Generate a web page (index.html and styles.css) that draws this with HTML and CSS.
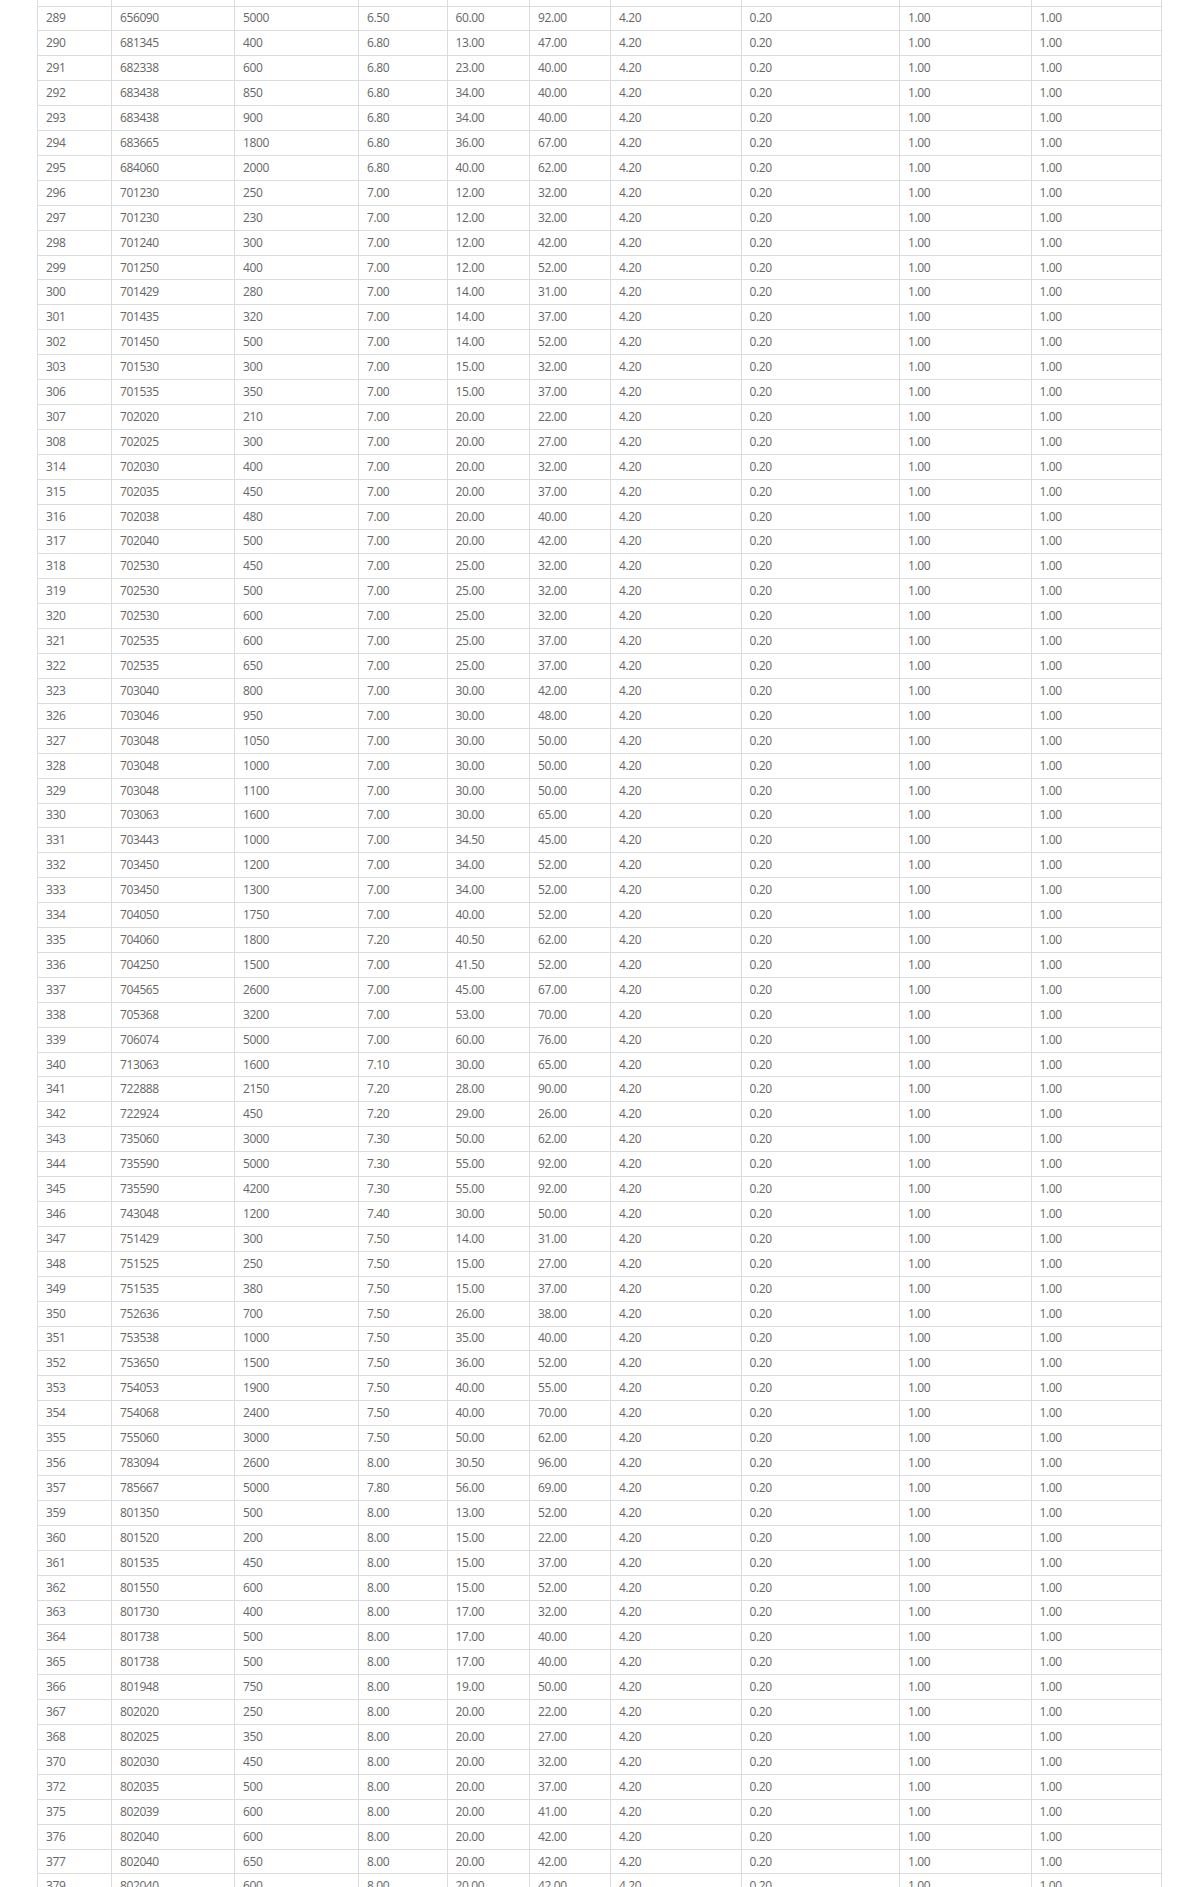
FILE: index.html
```html
<!DOCTYPE html>
<html lang="en">
<head>
<meta charset="utf-8">
<title>Data table</title>
<link rel="stylesheet" href="styles.css">
</head>
<body>
<table class="data">
<colgroup>
<col class="c1"><col class="c2"><col class="c3"><col class="c4"><col class="c5"><col class="c6"><col class="c7"><col class="c8"><col class="c9"><col class="c10">
</colgroup>
<tbody>
<tr class="spacer"><td></td><td></td><td></td><td></td><td></td><td></td><td></td><td></td><td></td><td></td></tr>
<tr><td>289</td><td>656090</td><td>5000</td><td>6.50</td><td>60.00</td><td>92.00</td><td>4.20</td><td>0.20</td><td>1.00</td><td>1.00</td></tr>
<tr><td>290</td><td>681345</td><td>400</td><td>6.80</td><td>13.00</td><td>47.00</td><td>4.20</td><td>0.20</td><td>1.00</td><td>1.00</td></tr>
<tr><td>291</td><td>682338</td><td>600</td><td>6.80</td><td>23.00</td><td>40.00</td><td>4.20</td><td>0.20</td><td>1.00</td><td>1.00</td></tr>
<tr><td>292</td><td>683438</td><td>850</td><td>6.80</td><td>34.00</td><td>40.00</td><td>4.20</td><td>0.20</td><td>1.00</td><td>1.00</td></tr>
<tr><td>293</td><td>683438</td><td>900</td><td>6.80</td><td>34.00</td><td>40.00</td><td>4.20</td><td>0.20</td><td>1.00</td><td>1.00</td></tr>
<tr><td>294</td><td>683665</td><td>1800</td><td>6.80</td><td>36.00</td><td>67.00</td><td>4.20</td><td>0.20</td><td>1.00</td><td>1.00</td></tr>
<tr><td>295</td><td>684060</td><td>2000</td><td>6.80</td><td>40.00</td><td>62.00</td><td>4.20</td><td>0.20</td><td>1.00</td><td>1.00</td></tr>
<tr><td>296</td><td>701230</td><td>250</td><td>7.00</td><td>12.00</td><td>32.00</td><td>4.20</td><td>0.20</td><td>1.00</td><td>1.00</td></tr>
<tr><td>297</td><td>701230</td><td>230</td><td>7.00</td><td>12.00</td><td>32.00</td><td>4.20</td><td>0.20</td><td>1.00</td><td>1.00</td></tr>
<tr><td>298</td><td>701240</td><td>300</td><td>7.00</td><td>12.00</td><td>42.00</td><td>4.20</td><td>0.20</td><td>1.00</td><td>1.00</td></tr>
<tr><td>299</td><td>701250</td><td>400</td><td>7.00</td><td>12.00</td><td>52.00</td><td>4.20</td><td>0.20</td><td>1.00</td><td>1.00</td></tr>
<tr><td>300</td><td>701429</td><td>280</td><td>7.00</td><td>14.00</td><td>31.00</td><td>4.20</td><td>0.20</td><td>1.00</td><td>1.00</td></tr>
<tr><td>301</td><td>701435</td><td>320</td><td>7.00</td><td>14.00</td><td>37.00</td><td>4.20</td><td>0.20</td><td>1.00</td><td>1.00</td></tr>
<tr><td>302</td><td>701450</td><td>500</td><td>7.00</td><td>14.00</td><td>52.00</td><td>4.20</td><td>0.20</td><td>1.00</td><td>1.00</td></tr>
<tr><td>303</td><td>701530</td><td>300</td><td>7.00</td><td>15.00</td><td>32.00</td><td>4.20</td><td>0.20</td><td>1.00</td><td>1.00</td></tr>
<tr><td>306</td><td>701535</td><td>350</td><td>7.00</td><td>15.00</td><td>37.00</td><td>4.20</td><td>0.20</td><td>1.00</td><td>1.00</td></tr>
<tr><td>307</td><td>702020</td><td>210</td><td>7.00</td><td>20.00</td><td>22.00</td><td>4.20</td><td>0.20</td><td>1.00</td><td>1.00</td></tr>
<tr><td>308</td><td>702025</td><td>300</td><td>7.00</td><td>20.00</td><td>27.00</td><td>4.20</td><td>0.20</td><td>1.00</td><td>1.00</td></tr>
<tr><td>314</td><td>702030</td><td>400</td><td>7.00</td><td>20.00</td><td>32.00</td><td>4.20</td><td>0.20</td><td>1.00</td><td>1.00</td></tr>
<tr><td>315</td><td>702035</td><td>450</td><td>7.00</td><td>20.00</td><td>37.00</td><td>4.20</td><td>0.20</td><td>1.00</td><td>1.00</td></tr>
<tr><td>316</td><td>702038</td><td>480</td><td>7.00</td><td>20.00</td><td>40.00</td><td>4.20</td><td>0.20</td><td>1.00</td><td>1.00</td></tr>
<tr><td>317</td><td>702040</td><td>500</td><td>7.00</td><td>20.00</td><td>42.00</td><td>4.20</td><td>0.20</td><td>1.00</td><td>1.00</td></tr>
<tr><td>318</td><td>702530</td><td>450</td><td>7.00</td><td>25.00</td><td>32.00</td><td>4.20</td><td>0.20</td><td>1.00</td><td>1.00</td></tr>
<tr><td>319</td><td>702530</td><td>500</td><td>7.00</td><td>25.00</td><td>32.00</td><td>4.20</td><td>0.20</td><td>1.00</td><td>1.00</td></tr>
<tr><td>320</td><td>702530</td><td>600</td><td>7.00</td><td>25.00</td><td>32.00</td><td>4.20</td><td>0.20</td><td>1.00</td><td>1.00</td></tr>
<tr><td>321</td><td>702535</td><td>600</td><td>7.00</td><td>25.00</td><td>37.00</td><td>4.20</td><td>0.20</td><td>1.00</td><td>1.00</td></tr>
<tr><td>322</td><td>702535</td><td>650</td><td>7.00</td><td>25.00</td><td>37.00</td><td>4.20</td><td>0.20</td><td>1.00</td><td>1.00</td></tr>
<tr><td>323</td><td>703040</td><td>800</td><td>7.00</td><td>30.00</td><td>42.00</td><td>4.20</td><td>0.20</td><td>1.00</td><td>1.00</td></tr>
<tr><td>326</td><td>703046</td><td>950</td><td>7.00</td><td>30.00</td><td>48.00</td><td>4.20</td><td>0.20</td><td>1.00</td><td>1.00</td></tr>
<tr><td>327</td><td>703048</td><td>1050</td><td>7.00</td><td>30.00</td><td>50.00</td><td>4.20</td><td>0.20</td><td>1.00</td><td>1.00</td></tr>
<tr><td>328</td><td>703048</td><td>1000</td><td>7.00</td><td>30.00</td><td>50.00</td><td>4.20</td><td>0.20</td><td>1.00</td><td>1.00</td></tr>
<tr><td>329</td><td>703048</td><td>1100</td><td>7.00</td><td>30.00</td><td>50.00</td><td>4.20</td><td>0.20</td><td>1.00</td><td>1.00</td></tr>
<tr><td>330</td><td>703063</td><td>1600</td><td>7.00</td><td>30.00</td><td>65.00</td><td>4.20</td><td>0.20</td><td>1.00</td><td>1.00</td></tr>
<tr><td>331</td><td>703443</td><td>1000</td><td>7.00</td><td>34.50</td><td>45.00</td><td>4.20</td><td>0.20</td><td>1.00</td><td>1.00</td></tr>
<tr><td>332</td><td>703450</td><td>1200</td><td>7.00</td><td>34.00</td><td>52.00</td><td>4.20</td><td>0.20</td><td>1.00</td><td>1.00</td></tr>
<tr><td>333</td><td>703450</td><td>1300</td><td>7.00</td><td>34.00</td><td>52.00</td><td>4.20</td><td>0.20</td><td>1.00</td><td>1.00</td></tr>
<tr><td>334</td><td>704050</td><td>1750</td><td>7.00</td><td>40.00</td><td>52.00</td><td>4.20</td><td>0.20</td><td>1.00</td><td>1.00</td></tr>
<tr><td>335</td><td>704060</td><td>1800</td><td>7.20</td><td>40.50</td><td>62.00</td><td>4.20</td><td>0.20</td><td>1.00</td><td>1.00</td></tr>
<tr><td>336</td><td>704250</td><td>1500</td><td>7.00</td><td>41.50</td><td>52.00</td><td>4.20</td><td>0.20</td><td>1.00</td><td>1.00</td></tr>
<tr><td>337</td><td>704565</td><td>2600</td><td>7.00</td><td>45.00</td><td>67.00</td><td>4.20</td><td>0.20</td><td>1.00</td><td>1.00</td></tr>
<tr><td>338</td><td>705368</td><td>3200</td><td>7.00</td><td>53.00</td><td>70.00</td><td>4.20</td><td>0.20</td><td>1.00</td><td>1.00</td></tr>
<tr><td>339</td><td>706074</td><td>5000</td><td>7.00</td><td>60.00</td><td>76.00</td><td>4.20</td><td>0.20</td><td>1.00</td><td>1.00</td></tr>
<tr><td>340</td><td>713063</td><td>1600</td><td>7.10</td><td>30.00</td><td>65.00</td><td>4.20</td><td>0.20</td><td>1.00</td><td>1.00</td></tr>
<tr><td>341</td><td>722888</td><td>2150</td><td>7.20</td><td>28.00</td><td>90.00</td><td>4.20</td><td>0.20</td><td>1.00</td><td>1.00</td></tr>
<tr><td>342</td><td>722924</td><td>450</td><td>7.20</td><td>29.00</td><td>26.00</td><td>4.20</td><td>0.20</td><td>1.00</td><td>1.00</td></tr>
<tr><td>343</td><td>735060</td><td>3000</td><td>7.30</td><td>50.00</td><td>62.00</td><td>4.20</td><td>0.20</td><td>1.00</td><td>1.00</td></tr>
<tr><td>344</td><td>735590</td><td>5000</td><td>7.30</td><td>55.00</td><td>92.00</td><td>4.20</td><td>0.20</td><td>1.00</td><td>1.00</td></tr>
<tr><td>345</td><td>735590</td><td>4200</td><td>7.30</td><td>55.00</td><td>92.00</td><td>4.20</td><td>0.20</td><td>1.00</td><td>1.00</td></tr>
<tr><td>346</td><td>743048</td><td>1200</td><td>7.40</td><td>30.00</td><td>50.00</td><td>4.20</td><td>0.20</td><td>1.00</td><td>1.00</td></tr>
<tr><td>347</td><td>751429</td><td>300</td><td>7.50</td><td>14.00</td><td>31.00</td><td>4.20</td><td>0.20</td><td>1.00</td><td>1.00</td></tr>
<tr><td>348</td><td>751525</td><td>250</td><td>7.50</td><td>15.00</td><td>27.00</td><td>4.20</td><td>0.20</td><td>1.00</td><td>1.00</td></tr>
<tr><td>349</td><td>751535</td><td>380</td><td>7.50</td><td>15.00</td><td>37.00</td><td>4.20</td><td>0.20</td><td>1.00</td><td>1.00</td></tr>
<tr><td>350</td><td>752636</td><td>700</td><td>7.50</td><td>26.00</td><td>38.00</td><td>4.20</td><td>0.20</td><td>1.00</td><td>1.00</td></tr>
<tr><td>351</td><td>753538</td><td>1000</td><td>7.50</td><td>35.00</td><td>40.00</td><td>4.20</td><td>0.20</td><td>1.00</td><td>1.00</td></tr>
<tr><td>352</td><td>753650</td><td>1500</td><td>7.50</td><td>36.00</td><td>52.00</td><td>4.20</td><td>0.20</td><td>1.00</td><td>1.00</td></tr>
<tr><td>353</td><td>754053</td><td>1900</td><td>7.50</td><td>40.00</td><td>55.00</td><td>4.20</td><td>0.20</td><td>1.00</td><td>1.00</td></tr>
<tr><td>354</td><td>754068</td><td>2400</td><td>7.50</td><td>40.00</td><td>70.00</td><td>4.20</td><td>0.20</td><td>1.00</td><td>1.00</td></tr>
<tr><td>355</td><td>755060</td><td>3000</td><td>7.50</td><td>50.00</td><td>62.00</td><td>4.20</td><td>0.20</td><td>1.00</td><td>1.00</td></tr>
<tr><td>356</td><td>783094</td><td>2600</td><td>8.00</td><td>30.50</td><td>96.00</td><td>4.20</td><td>0.20</td><td>1.00</td><td>1.00</td></tr>
<tr><td>357</td><td>785667</td><td>5000</td><td>7.80</td><td>56.00</td><td>69.00</td><td>4.20</td><td>0.20</td><td>1.00</td><td>1.00</td></tr>
<tr><td>359</td><td>801350</td><td>500</td><td>8.00</td><td>13.00</td><td>52.00</td><td>4.20</td><td>0.20</td><td>1.00</td><td>1.00</td></tr>
<tr><td>360</td><td>801520</td><td>200</td><td>8.00</td><td>15.00</td><td>22.00</td><td>4.20</td><td>0.20</td><td>1.00</td><td>1.00</td></tr>
<tr><td>361</td><td>801535</td><td>450</td><td>8.00</td><td>15.00</td><td>37.00</td><td>4.20</td><td>0.20</td><td>1.00</td><td>1.00</td></tr>
<tr><td>362</td><td>801550</td><td>600</td><td>8.00</td><td>15.00</td><td>52.00</td><td>4.20</td><td>0.20</td><td>1.00</td><td>1.00</td></tr>
<tr><td>363</td><td>801730</td><td>400</td><td>8.00</td><td>17.00</td><td>32.00</td><td>4.20</td><td>0.20</td><td>1.00</td><td>1.00</td></tr>
<tr><td>364</td><td>801738</td><td>500</td><td>8.00</td><td>17.00</td><td>40.00</td><td>4.20</td><td>0.20</td><td>1.00</td><td>1.00</td></tr>
<tr><td>365</td><td>801738</td><td>500</td><td>8.00</td><td>17.00</td><td>40.00</td><td>4.20</td><td>0.20</td><td>1.00</td><td>1.00</td></tr>
<tr><td>366</td><td>801948</td><td>750</td><td>8.00</td><td>19.00</td><td>50.00</td><td>4.20</td><td>0.20</td><td>1.00</td><td>1.00</td></tr>
<tr><td>367</td><td>802020</td><td>250</td><td>8.00</td><td>20.00</td><td>22.00</td><td>4.20</td><td>0.20</td><td>1.00</td><td>1.00</td></tr>
<tr><td>368</td><td>802025</td><td>350</td><td>8.00</td><td>20.00</td><td>27.00</td><td>4.20</td><td>0.20</td><td>1.00</td><td>1.00</td></tr>
<tr><td>370</td><td>802030</td><td>450</td><td>8.00</td><td>20.00</td><td>32.00</td><td>4.20</td><td>0.20</td><td>1.00</td><td>1.00</td></tr>
<tr><td>372</td><td>802035</td><td>500</td><td>8.00</td><td>20.00</td><td>37.00</td><td>4.20</td><td>0.20</td><td>1.00</td><td>1.00</td></tr>
<tr><td>375</td><td>802039</td><td>600</td><td>8.00</td><td>20.00</td><td>41.00</td><td>4.20</td><td>0.20</td><td>1.00</td><td>1.00</td></tr>
<tr><td>376</td><td>802040</td><td>600</td><td>8.00</td><td>20.00</td><td>42.00</td><td>4.20</td><td>0.20</td><td>1.00</td><td>1.00</td></tr>
<tr><td>377</td><td>802040</td><td>650</td><td>8.00</td><td>20.00</td><td>42.00</td><td>4.20</td><td>0.20</td><td>1.00</td><td>1.00</td></tr>
<tr><td>379</td><td>802040</td><td>600</td><td>8.00</td><td>20.00</td><td>42.00</td><td>4.20</td><td>0.20</td><td>1.00</td><td>1.00</td></tr>
</tbody>
</table>
</body>
</html>
```

FILE: styles.css
```css
html, body {
  margin: 0;
  padding: 0;
  background: #ffffff;
}

body {
  font-family: "Open Sans", "Noto Sans", "Liberation Sans", sans-serif;
  font-size: 12px;
  letter-spacing: -0.4px;
  color: #666666;
}

.data {
  margin-left: 37px;
  width: 1124px;
  table-layout: fixed;
  border-collapse: collapse;
}

.c1 { width: 74px; }
.c2 { width: 123px; }
.c3 { width: 124px; }
.c4 { width: 88.5px; }
.c5 { width: 82.5px; }
.c6 { width: 81px; }
.c7 { width: 130.5px; }
.c8 { width: 158.5px; }
.c9 { width: 131.5px; }
.c10 { width: 130.5px; }

.data tr {
  height: 24.92px;
}

.data td {
  border: 1px solid #dcdcdc;
  padding: 0 8px 0 8px;
  line-height: 14px;
  vertical-align: middle;
  white-space: nowrap;
  overflow: hidden;
}

.data tr.spacer {
  height: 6px;
}

.data tr.spacer td {
  border-top: none;
  padding: 0;
  line-height: 0;
}
```
